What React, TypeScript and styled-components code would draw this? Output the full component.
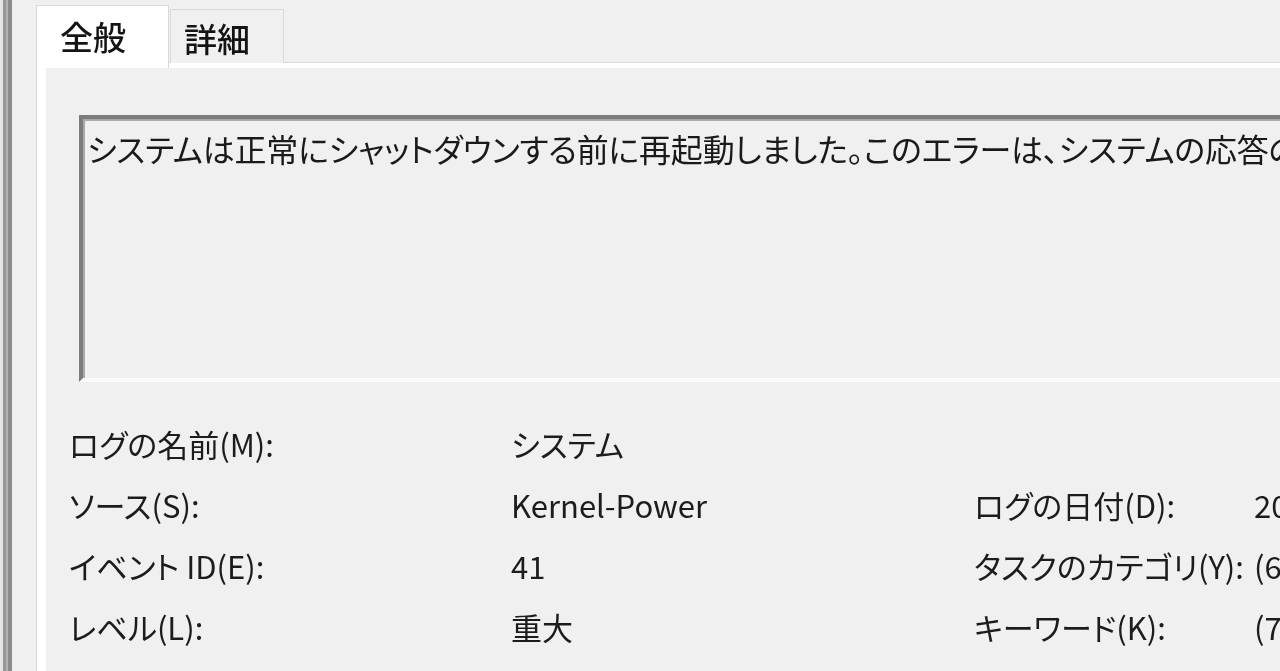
import React from 'react';
import styled, { createGlobalStyle } from 'styled-components';

const GlobalStyle = createGlobalStyle`
    html, body {
        margin: 0;
        padding: 0;
        background: #f0f0f0;
    }
    body {
        font-family: 'Noto Sans CJK JP', 'Noto Sans', sans-serif;
        color: #1c1c1c;
    }
`;

type Field = { label: string; value: string };

const leftFields: Field[] = [
    { label: 'ログの名前(M):', value: 'システム' },
    { label: 'ソース(S):', value: 'Kernel-Power' },
    { label: 'イベント ID(E):', value: '41' },
    { label: 'レベル(L):', value: '重大' },
];

const rightFields: (Field | null)[] = [
    null,
    { label: 'ログの日付(D):', value: '2023/11/08 7:42:15' },
    { label: 'タスクのカテゴリ(Y):', value: '(63)' },
    { label: 'キーワード(K):', value: '(70368744177664),(2)' },
];

const App = () => {
    return (
        <Window>
            <GlobalStyle />
            <LeftEdge />
            <Gutter />
            <TabControl>
                <TabStrip>
                    <Tab active>全般</Tab>
                    <Tab>詳細</Tab>
                </TabStrip>
                <TabPage>
                    <Content>
                        <Description>
                            システムは正常にシャットダウンする前に再起動しました。このエラーは、システムの応答の停止、クラッシュ、または予期しない電源の遮断により発生する可能性があります。
                        </Description>
                        <Fields>
                            {leftFields.map((f, i) => (
                                <React.Fragment key={f.label}>
                                    <Label>{f.label}</Label>
                                    <Value>{f.value}</Value>
                                    <Label>{rightFields[i]?.label ?? ''}</Label>
                                    <Value>{rightFields[i]?.value ?? ''}</Value>
                                </React.Fragment>
                            ))}
                        </Fields>
                    </Content>
                </TabPage>
            </TabControl>
        </Window>
    );
};

const Window = styled.div`
    display: flex;
    width: 1280px;
    height: 671px;
    overflow: hidden;
    background: #f0f0f0;
    font-feature-settings: 'palt';
    filter: blur(0.35px);
`;

const LeftEdge = styled.div`
    flex: 0 0 12px;
    background: linear-gradient(
        to right,
        #e4e4e4 0 3px,
        #969696 3px 6px,
        #b3b3b3 6px 8px,
        #8b8b8b 8px 12px
    );
`;

const Gutter = styled.div`
    flex: 0 0 24px;
`;

const TabControl = styled.div`
    flex: 1;
    display: flex;
    flex-direction: column;
    min-width: 0;
`;

const TabStrip = styled.div`
    display: flex;
    align-items: flex-end;
    height: 68px;
    padding-top: 5px;
    box-sizing: border-box;
    position: relative;
    z-index: 1;
`;

const Tab = styled.div<{ active?: boolean }>`
    box-sizing: border-box;
    display: flex;
    align-items: center;
    font-size: 33px;
    font-weight: 500;
    line-height: 1;
    color: #141414;
    border: 1px solid ${(p) => (p.active ? '#d9d9d9' : '#dadada')};
    border-bottom: none;
    width: ${(p) => (p.active ? '133px' : '114px')};
    height: ${(p) => (p.active ? '63px' : '54px')};
    margin-bottom: ${(p) => (p.active ? '0' : '5px')};
    padding: ${(p) => (p.active ? '0 0 2px 23px' : '4px 0 0 13px')};
    background: ${(p) => (p.active ? '#ffffff' : '#f0f0f0')};
    margin-left: ${(p) => (p.active ? '0' : '1px')};
`;

const TabPage = styled.div`
    flex: 1;
    display: flex;
    border-left: 1px solid #d9d9d9;
    border-top: 1px solid #dcdcdc;
    margin-top: -6px;
    padding: 5px 0 0 9px;
    background: #ffffff;
    min-width: 0;
`;

const Content = styled.div`
    flex: 1;
    background: #f0f0f0;
    padding: 47px 0 0 0;
    min-width: 0;
    overflow: hidden;
`;

const Description = styled.div`
    margin-left: 33px;
    height: 267px;
    box-sizing: border-box;
    border-top: 4px solid #7c7c7c;
    border-left: 4px solid #7c7c7c;
    border-bottom: 4px solid #fafafa;
    box-shadow: inset 0 2px 0 #a9a9a9, inset 2px 0 0 #a9a9a9;
    padding: 7px 0 0 4px;
    font-size: 32px;
    line-height: 44px;
    letter-spacing: -0.2px;
    white-space: nowrap;
    overflow: hidden;
    color: #1a1a1a;
`;

const Fields = styled.div`
    display: grid;
    grid-template-columns: 442px 463px 280px 1fr;
    grid-auto-rows: 61px;
    margin: 31px 0 0 23px;
    font-size: 31px;
    white-space: nowrap;
`;

const Label = styled.div`
    display: flex;
    align-items: center;
    color: #1c1c1c;
`;

const Value = styled(Label)`
    overflow: hidden;
`;

export default App;
